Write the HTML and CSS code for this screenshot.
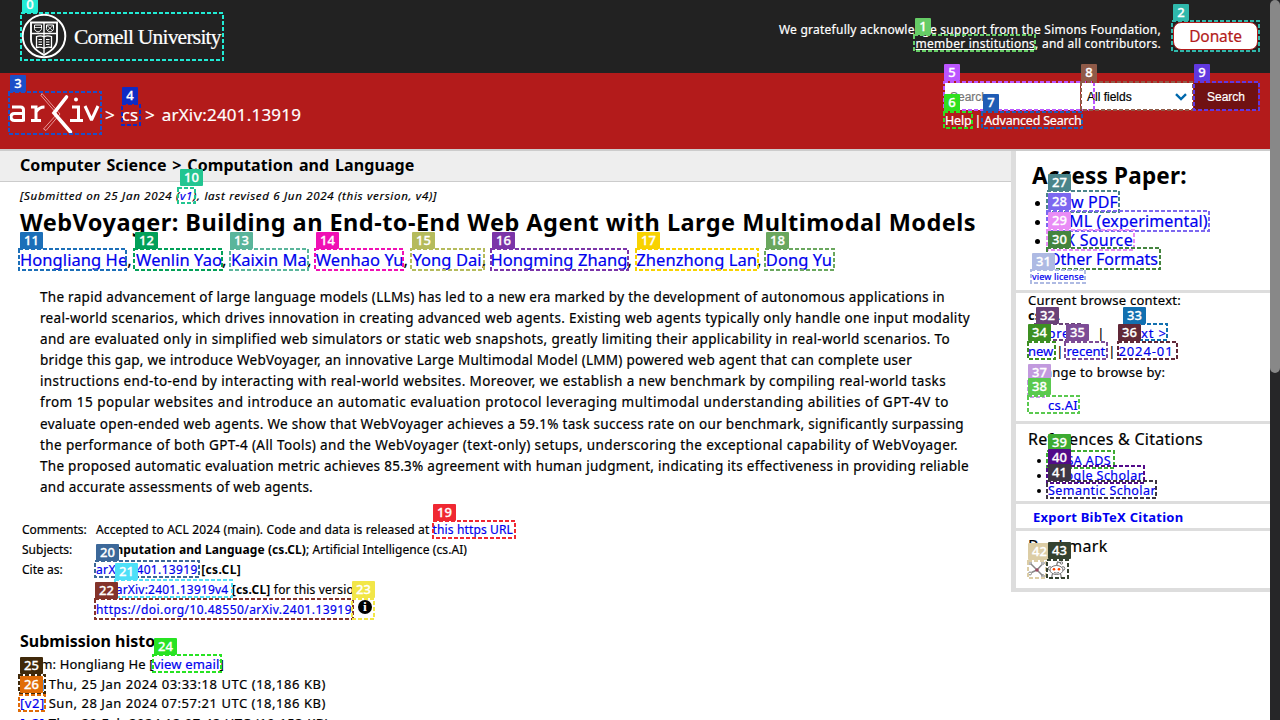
FILE: index.html
```html
<!DOCTYPE html>
<html lang="en">
<head>
<meta charset="utf-8">
<title>[2401.13919] WebVoyager</title>
<link rel="stylesheet" href="styles.css">
</head>
<body>
<div class="page">
<header class="topbar">
  <div class="cornell">
    <svg class="seal" width="46" height="46" viewBox="0 0 46 46" fill="none" stroke="#fff">
      <circle cx="23" cy="23" r="21.300" stroke-width="2"/>
      <path d="M10 9.500h26v17c0 8-7 12-13 15.500C17 38.500 10 34.500 10 26.500z" stroke-width="1.900"/>
      <path d="M10 20.500h26M23 9.500v11" stroke-width="1.400"/>
      <path d="M13.500 12h7v3.500c0 2-2 3-3.500 3.500c-1.500-.5-3.500-1.500-3.500-3.500zM25.500 12h7v3.500c0 2-2 3-3.500 3.500c-1.500-.5-3.500-1.500-3.500-3.500z"/>
      <path d="M14 14.500h6M26 12.500l5.500 5M32 12.500l-5.500 5" stroke-width=".8"/>
      <path d="M15.500 23.500c3-1 5.500-1 7.500.5c2-1.500 4.500-1.500 7.500-.5v11c-3-.8-5.500-.6-7.500 1c-2-1.600-4.500-1.800-7.500-1zM23 20.500v20" stroke-width="1.300"/>
      <path d="M17.500 26.500h3.500M17.500 29h3.500M17.500 31.500h3.500M25 26.500h3.500M25 29h3.500M25 31.500h3.500" stroke-width="1"/>
    </svg>
    <span class="wordmark">Cornell University</span>
  </div>
  <div class="support">
    <div class="ack">We gratefully acknowledge support from the Simons Foundation,<br><a class="under">member institutions</a>, and all contributors.</div>
    <a class="donate">Donate</a>
  </div>
</header>
<div class="redbar">
  <div class="crumbs">
    <svg class="logo" width="92" height="44" viewBox="0 0 92 44" fill="none" stroke="#fff" stroke-width="3">
      <path d="M3 15h8.500q3 0 3 3v11.500M14.500 21.500H5.500q-3.500 0-3.500 3.500q0 3.500 3.500 3.500h9"/>
      <path d="M22 15h5v14M22 28.500h10M27 20q3-5 8.500-5"/>
      <path d="M63 15h6.500v13.500M61 28.500h13"/><path d="M76 14l6.500 14L89 14" stroke-linejoin="bevel"/>
      <circle cx="67" cy="7.500" r="2" fill="#fff" stroke="none"/>
      <path d="M33 1.500l18 20.500L37 38.500l-2.500-1.500L48 22L32 3.500z" stroke="#e89a9a" stroke-width="1"/>
      <path d="M57.500 5L45 21l16.500 19" stroke-width="3.600" stroke-linecap="round"/>
    </svg>
    <span class="path">&gt; <a>cs</a> &gt; arXiv:2401.13919</span>
  </div>
  <div class="searchbox">
    <div class="fields"><span class="query">Search...</span><span class="select">All fields
      <svg width="12" height="8" viewBox="0 0 12 8" fill="none" stroke="#0068ac" stroke-width="2.400"><path d="M1 1.200l5 4.800l5-4.800"/></svg></span><span class="go">Search</span></div>
    <div class="help"><a>Help</a> | <a>Advanced Search</a></div>
  </div>
</div>
<div class="columns">
<main>
  <div class="subject">Computer Science &gt; Computation and Language</div>
  <div class="dateline">[Submitted on 25 Jan 2024 (<a>v1</a>), last revised 6 Jun 2024 (this version, v4)]</div>
  <h1>WebVoyager: Building an End-to-End Web Agent with Large Multimodal Models</h1>
  <div class="authors"><a>Hongliang He</a>, <a>Wenlin Yao</a>, <a>Kaixin Ma</a>, <a>Wenhao Yu</a>, <a>Yong Dai</a>, <a>Hongming Zhang</a>, <a>Zhenzhong Lan</a>, <a>Dong Yu</a></div>
  <div class="abstract">
    <span>The rapid advancement of large language models (LLMs) has led to a new era marked by the development of autonomous applications in</span>
    <span>real-world scenarios, which drives innovation in creating advanced web agents. Existing web agents typically only handle one input modality</span>
    <span>and are evaluated only in simplified web simulators or static web snapshots, greatly limiting their applicability in real-world scenarios. To</span>
    <span>bridge this gap, we introduce WebVoyager, an innovative Large Multimodal Model (LMM) powered web agent that can complete user</span>
    <span>instructions end-to-end by interacting with real-world websites. Moreover, we establish a new benchmark by compiling real-world tasks</span>
    <span>from 15 popular websites and introduce an automatic evaluation protocol leveraging multimodal understanding abilities of GPT-4V to</span>
    <span>evaluate open-ended web agents. We show that WebVoyager achieves a 59.1% task success rate on our benchmark, significantly surpassing</span>
    <span>the performance of both GPT-4 (All Tools) and the WebVoyager (text-only) setups, underscoring the exceptional capability of WebVoyager.</span>
    <span>The proposed automatic evaluation metric achieves 85.3% agreement with human judgment, indicating its effectiveness in providing reliable</span>
    <span>and accurate assessments of web agents.</span>
  </div>
  <div class="meta">
    <span>Comments:</span><span class="comments">Accepted to ACL 2024 (main). Code and data is released at <a>this https URL</a></span>
    <span>Subjects:</span><span class="subjects"><b>Computation and Language (cs.CL)</b>; Artificial Intelligence (cs.AI)</span>
    <span>Cite as:</span><span class="cite"><a>arXiv:2401.13919</a> <b>[cs.CL]</b></span>
    <span></span><span class="version">(or <a>arXiv:2401.13919v4</a> <b>[cs.CL]</b> for this version)</span>
    <span></span><span class="doi"><a>https://doi.org/10.48550/arXiv.2401.13919</a><i class="info">i</i></span>
  </div>
  <h2>Submission history</h2>
  <div class="history">
    <span class="from">From: Hongliang He [<a>view email</a>]</span>
    <span><a>[v1]</a> Thu, 25 Jan 2024 03:33:18 UTC (18,186 KB)</span>
    <span><a>[v2]</a> Sun, 28 Jan 2024 07:57:21 UTC (18,186 KB)</span>
    <span><a>[v3]</a> Thu, 29 Feb 2024 12:07:42 UTC (19,153 KB)</span>
  </div>
</main>
<aside>
  <section class="access">
    <h3>Access Paper:</h3>
    <ul><li><a>View PDF</a></li><li><a>HTML (experimental)</a></li><li class="tex"><a>TeX Source</a></li><li class="plain"><a>Other Formats</a></li></ul>
    <div class="license"><a>view license</a></div>
  </section>
  <section class="browse">
    <div>Current browse context:</div>
    <div class="current"><b>cs.CL</b></div>
    <div class="nav"><a class="prev">&lt; prev</a><span class="bar">|</span><a class="next">next &gt;</a></div>
    <div class="periods"><a>new</a><span>|</span><a>recent</a><span>|</span><a class="month">2024-01</a></div>
    <div class="change">Change to browse by:</div>
    <div class="subj"><a>cs</a></div>
    <div class="subj sub"><a>cs.AI</a></div>
  </section>
  <section class="refs">
    <h4>References &amp; Citations</h4>
    <ul><li><a>NASA ADS</a></li><li><a>Google Scholar</a></li><li><a>Semantic Scholar</a></li></ul>
  </section>
  <section class="export"><a>Export BibTeX Citation</a></section>
  <section class="bookmark">
    <h4>Bookmark</h4>
    <div class="icons">
      <svg width="17" height="17" viewBox="0 0 17 17" fill="none" stroke="#888"><path d="M3 3l6 6l5-5.500M9 9l-5.500 2.500M9 9l5.500 5.500" stroke-width="1.500"/><circle cx="2" cy="2" r="1.300"/><circle cx="15" cy="2" r="1.300"/><circle cx="2" cy="12.500" r="1.500"/><circle cx="15" cy="15" r="1.300"/><circle cx="9" cy="9" r="1.200" stroke="#a03050"/></svg>
      <svg width="19" height="17" viewBox="0 0 19 17" fill="#fff" stroke="#777"><path d="M5 17c-.5-4 1-6 4.500-6s5 2 4.500 6M9.500 5l1-4l3.500.8" stroke-width="1.200"/><circle cx="3" cy="7.500" r="1.800"/><circle cx="16" cy="7.500" r="1.800"/><ellipse cx="9.500" cy="9" rx="6.500" ry="4.500"/><circle cx="14.500" cy="2" r="1.200"/><circle cx="7" cy="8.300" r="1.300" fill="#ff4500" stroke="none"/><circle cx="12" cy="8.300" r="1.300" fill="#ff4500" stroke="none"/><path d="M7 11.500q2.500 1.300 5 0"/></svg>
    </div>
  </section>
</aside>
</div>
</div>
<div class="scrollbar"><div class="thumb"></div></div>
<svg class="marks" id="marks" width="1280" height="720" viewBox="0 0 1280 720"></svg>
<script src="marks.js"></script>
</body>
</html>
```
FILE: marks.js
```js
// Numbered element marks: left, top, right, bottom, colour, tag left, tag top
const marks = [
  [20, 12, 224, 61, '#22ebd5', 22, -4],
  [913, 34, 1036, 52, '#66cc66', 915, 18],
  [1171, 20, 1260, 52, '#2fb8ab', 1173, 4],
  [8, 91, 102, 135, '#1c4fc8', 10, 75],
  [121, 103, 141, 126, '#0f2bc4', 122, 87],
  [943, 81, 1095, 111, '#bb55ff', 944, 64],
  [943, 111, 973, 129, '#2fe01f', 944, 94],
  [981, 111, 1083, 129, '#1f5cb5', 983, 94],
  [1080, 81, 1194, 111, '#8f5a48', 1081, 64],
  [1193, 81, 1260, 111, '#6038e0', 1194, 64],
  [177, 187, 196, 204, '#22c591', 180, 169],
  [18, 248, 127, 271, '#1c6fb8', 20, 232],
  [133, 248, 223, 271, '#02a059', 135, 232],
  [229, 248, 309, 271, '#5ab59b', 230, 232],
  [314, 248, 404, 271, '#f010b4', 316, 232],
  [410, 248, 485, 271, '#b5bb5c', 412, 232],
  [490, 248, 629, 271, '#7b35a8', 492, 232],
  [635, 248, 759, 271, '#f8d200', 637, 232],
  [764, 248, 835, 271, '#6aa75e', 766, 232],
  [432, 520, 516, 539, '#f02832', 433, 504],
  [94, 560, 200, 578, '#3c6899', 96, 544],
  [114, 579, 233, 598, '#4ee0f8', 115, 563],
  [94, 598, 354, 620, '#83332a', 95, 582],
  [351, 598, 375, 620, '#f2e648', 352, 581],
  [152, 654, 222, 673, '#28e323', 154, 638],
  [18, 674, 46, 694, '#40290a', 20, 657],
  [18, 694, 46, 712, '#e06c08', 20, 676],
  [1046, 190, 1120, 213, '#4a848a', 1048, 174],
  [1046, 210, 1210, 232, '#7c67f0', 1048, 193],
  [1046, 229, 1135, 251, '#e98cf6', 1048, 212],
  [1046, 247, 1161, 270, '#44843f', 1048, 231],
  [1030, 269, 1086, 284, '#aebae3', 1032, 253],
  [1034, 323, 1084, 341, '#6a4278', 1036, 307],
  [1122, 323, 1168, 341, '#1270b0', 1123, 307],
  [1027, 341, 1056, 360, '#3d8f22', 1028, 324],
  [1064, 341, 1108, 360, '#7d4c96', 1066, 324],
  [1117, 341, 1178, 360, '#602838', 1118, 324],
  [1027, 380, 1045, 398, '#c29ade', 1028, 364],
  [1027, 395, 1080, 414, '#5ac94f', 1028, 378],
  [1046, 450, 1115, 469, '#3dab32', 1048, 434],
  [1046, 465, 1145, 484, '#520a8a', 1048, 449],
  [1046, 480, 1157, 499, '#3e3644', 1048, 464],
  [1027, 560, 1047, 579, '#dccda5', 1028, 543],
  [1046, 559, 1069, 579, '#35422f', 1048, 542]
];

document.getElementById('marks').innerHTML = marks.map(([l, t, r, b, color, x, y], i) => {
  const w = i < 10 ? 16 : 23;
  return `<g color="${color}"><rect class="box" x="${l + 1}" y="${t + 1}" width="${r - l - 2}" height="${b - t - 2}"/>` +
    `<rect class="tag" x="${x}" y="${y}" width="${w}" height="17" rx="1"/>` +
    `<text class="num" x="${x + w / 2}" y="${y + 13}">${i}</text></g>`;
}).join('');
```
FILE: styles.css
```css
*{box-sizing:border-box}
body{margin:0;width:1280px;height:720px;overflow:hidden;display:flex;background:#fff;color:#000;font-family:"Noto Sans","Open Sans",sans-serif;white-space:nowrap;-webkit-text-stroke:.2px}
a{color:#00e}
b,h1,h2,h3,.subject,.export{-webkit-text-stroke:0}
h1,h2,h3,h4,ul{margin:0;padding:0}
.page{width:1270px;height:720px;overflow:hidden}
.topbar{height:73px;background:#222;color:#fff;display:flex;justify-content:space-between;padding-right:12px}
.cornell{display:flex;padding:13px 0 0 21px;gap:7px}
.wordmark{font:21.500px/46px "Liberation Serif",serif;letter-spacing:-.77px;padding-top:1px}
.support{display:flex;gap:12px}
.ack{text-align:right;font-size:12px;line-height:14px;padding-top:23px;letter-spacing:.25px}
.under{color:#fff;text-decoration:underline}
.donate{width:85px;height:28px;margin-top:22px;border:1px solid #b31b1b;border-radius:8px;background:#fff;color:#b31b1b;font-size:15.500px;line-height:26px;text-align:center;letter-spacing:-.1px}
.redbar{height:78px;background:#b31b1b;border-bottom:2px solid #ccc;display:flex;justify-content:space-between;color:#fff}
.redbar a{color:#fff}
.crumbs{display:flex;gap:4px;padding:19px 0 0 9px}
.path{font-size:17px;line-height:24px;padding-top:11px;letter-spacing:.2px;word-spacing:2.100px}
.searchbox{width:325px;padding-top:10px}
.fields{display:flex;font:12px/28px "Liberation Sans",sans-serif;color:#000}
.query{width:135px;height:27px;padding-left:5px;background:#fff;color:#777}
.select{width:112px;height:27px;margin-left:1px;background:#fff;padding:0 6px 0 6px;display:flex;justify-content:space-between;align-items:center}
.go{width:64px;height:27px;margin-left:1px;background:#701112;color:#fff;text-align:center;line-height:29px}
.help{font-size:12.500px;line-height:18px;padding-top:2px;letter-spacing:-.2px}
.columns{display:flex}
main{width:1011px}
.subject{height:31px;background:#eee;border-bottom:1px solid #ccc;padding-left:20px;font-size:16px;font-weight:700;line-height:29px;letter-spacing:.08px;word-spacing:1.500px}
.dateline{padding:6px 0 0 20px;font-size:11.500px;line-height:16px;font-style:italic;letter-spacing:.693px}
h1{padding-left:20px;font-size:23.500px;line-height:36px;height:43px;letter-spacing:.467px}
.authors{padding-left:20px;font-size:16.500px;line-height:22px;margin-top:2px;letter-spacing:.064px}
.abstract{padding:16px 0 0 40px;font-size:13.500px;line-height:21.100px;display:flex;flex-direction:column;align-items:flex-start;letter-spacing:.294px}
.abstract :nth-child(1){letter-spacing:.282px}
.abstract :nth-child(2){letter-spacing:.312px}
.abstract :nth-child(3){letter-spacing:.335px}
.abstract :nth-child(4){letter-spacing:.259px}
.abstract :nth-child(5){letter-spacing:.392px}
.abstract :nth-child(6){letter-spacing:.494px}
.abstract :nth-child(8){letter-spacing:.384px}
.abstract :nth-child(9){letter-spacing:.283px}
.abstract :nth-child(10){letter-spacing:.253px}
.meta{padding:22.500px 0 0 22px;display:grid;grid-template-columns:74px auto;justify-items:start;grid-auto-rows:19.800px;font-size:12px;line-height:20px}
.comments{letter-spacing:.132px}
.subjects{letter-spacing:.086px}
.cite{letter-spacing:.35px}
.version{letter-spacing:.2px}
.doi{display:flex;gap:6px;letter-spacing:.448px}
.info{width:14px;height:14px;border-radius:50%;background:#000;color:#fff;font:bold 12px/14px "Liberation Serif",serif;text-align:center;letter-spacing:0}
h2{padding:10px 0 0 20px;font-size:16px;line-height:24px}
.history{padding:2px 0 0 20px;font-size:13px;line-height:19.400px;display:flex;flex-direction:column;align-items:flex-start;letter-spacing:.54px}
.history .from{letter-spacing:.17px}
aside{width:259px;height:441px;border-left:5px solid #ddd;border-bottom:4px solid #ddd}
section{border-bottom:3px solid #ddd}
ul{list-style:none}
li{position:relative}
.access{height:142px;padding-left:16px}
h3{font-size:22.500px;line-height:30px;padding-top:10px;height:42px;letter-spacing:.2px}
.access li{font-size:16px;line-height:19px;padding-left:16px;letter-spacing:.15px}
.access li.tex{letter-spacing:.33px}
.access li.plain{letter-spacing:0}
li::before{content:"";position:absolute;left:3px;top:8px;width:5px;height:5px;border-radius:50%;background:#000}
.plain::before{display:none}
.license{font-size:9px;line-height:14px;padding-top:1px;letter-spacing:.15px}
.browse{height:131px;padding-left:12px;font-size:13px;line-height:15px;letter-spacing:.26px}
.current{letter-spacing:0}
.nav,.periods{line-height:18px;display:flex}
.nav{padding:1px 0 0 7px}
.prev{width:48px;letter-spacing:.8px}
.bar{width:36px;text-align:center}
.next{margin-left:5px;letter-spacing:.9px}
.periods{gap:3px;letter-spacing:0}
.month{letter-spacing:.9px}
.change{padding:5px 0 1px}
.subj{line-height:16px}
.sub{padding-left:20px}
.refs{height:80px;padding-left:12px}
h4{font-weight:400;font-size:16px;line-height:24px;padding-top:3px;letter-spacing:.26px}
.refs ul{padding-top:2px;letter-spacing:.45px}
.refs li{font-size:12.500px;line-height:15px;padding-left:20px}
.refs li::before{left:9px;top:6px;width:4px;height:4px}
.export{height:27px;padding-left:17px;font-size:13px;line-height:26px;font-weight:700;letter-spacing:.25px}
.bookmark{border:0;padding-left:12px}
.icons{display:flex;gap:2px;padding-top:3px}
.scrollbar{width:10px;height:720px;background:#262628}
.thumb{height:373px;border-radius:5px;background:#888}
.marks{position:absolute;left:0;top:0}
.box{fill:none;stroke:currentColor;stroke-width:2;stroke-dasharray:4 2}
.tag{fill:currentColor}
.num{fill:#fff;font:500 13px "Noto Sans","Open Sans",sans-serif;text-anchor:middle;stroke:#fff;stroke-width:.3}
```
